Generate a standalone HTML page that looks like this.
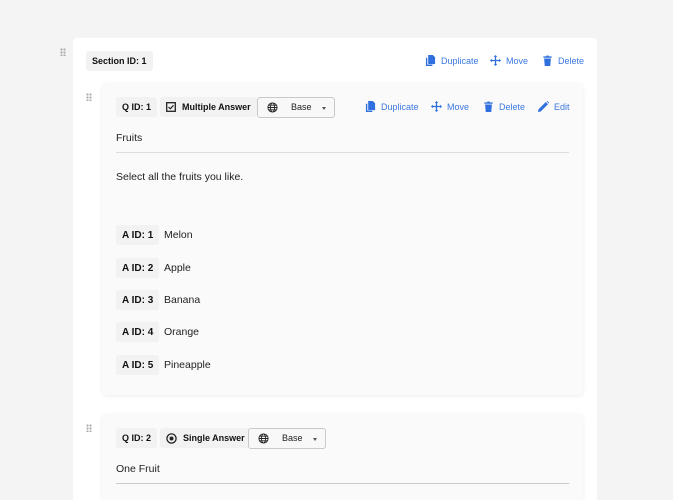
<!DOCTYPE html>
<html style="width:673px;height:500px;overflow:hidden"><head><style>
*{margin:0;padding:0;box-sizing:border-box}
body{width:673px;height:500px;background:#f4f4f4;font-family:"Liberation Sans",sans-serif;position:relative;overflow:hidden;color:#222}
.abs{position:absolute}
.sec{left:73px;top:38px;width:524px;height:462px;background:#fff;border-radius:4px 4px 0 0}
.q{background:#fafafa;border-radius:4px;box-shadow:0 1px 4px rgba(0,0,0,.08)}
.badge{position:absolute;background:#f2f2f2;border-radius:3px;font-size:9px;font-weight:bold;height:20px;padding:0 6px;color:#111;white-space:nowrap;display:flex;align-items:center}
.act{position:absolute;color:#3b78e0;font-size:9px;display:flex;align-items:center;gap:5px;white-space:nowrap}
.act svg{width:11px;height:11px;fill:#2f6fde}
.dd{position:absolute;border:1px solid #c9c9c9;border-radius:3px;background:#f8f8f8;height:21px;font-size:9px;color:#222}
.dd .ar{position:absolute;left:64px;top:9px;border-left:2.5px solid transparent;border-right:2.5px solid transparent;border-top:3px solid #555}
.grip{position:absolute;width:6px;height:8px;background:radial-gradient(circle,#aaa 1px,transparent 1.2px) 0 0/3px 3px}
.t{position:absolute;font-size:10.5px;color:#222;white-space:nowrap}
.line{position:absolute;height:1px;background:#ddd}
.glob{position:absolute;left:9px;top:4px;width:11px;height:11px}
</style></head><body>
<div class="grip" style="left:60px;top:48px"></div>
<div class="abs sec"></div>
<div class="badge" style="left:86px;top:51px">Section ID: 1</div>
<div class="act" style="left:425px;top:55px"><svg viewBox="0 0 12 12"><path d="M1 3h1.5v7.5H8V12H1z M3.5 0h5l2.5 2.5V10h-7.5z"/></svg>Duplicate</div>
<div class="act" style="left:490px;top:55px"><svg viewBox="0 0 12 12"><path d="M6 0l2 2H6.7v3.3H10V4l2 2-2 2V6.7H6.7V10H8l-2 2-2-2h1.3V6.7H2V8L0 6l2-2v1.3h3.3V2H4z"/></svg>Move</div>
<div class="act" style="left:542px;top:55px"><svg viewBox="0 0 12 12"><path d="M1.5 1.5h3l.5-1h2l.5 1h3V3h-9z M2.3 3.8h7.4L9 12H3z"/></svg>Delete</div>

<div class="grip" style="left:86px;top:93px"></div>
<div class="abs q" style="left:102px;top:83px;width:481px;height:312px"></div>
<div class="badge" style="left:116px;top:97px">Q ID: 1</div>
<div class="badge" style="left:160px;top:97px"><svg width="10" height="10" viewBox="0 0 10 10" style="margin-right:6px"><rect x="0.7" y="0.7" width="8.6" height="8.6" fill="none" stroke="#222" stroke-width="1.3"/><path d="M2.5 5l1.8 1.8L7.5 3.3" fill="none" stroke="#222" stroke-width="1.2"/></svg>Multiple Answer</div>
<div class="dd" style="left:257px;top:97px;width:78px"><svg class="glob" viewBox="0 0 12 12" fill="none" stroke="#222" stroke-width="1"><circle cx="6" cy="6" r="5"/><ellipse cx="6" cy="6" rx="2.2" ry="5"/><path d="M1 6h10M1.8 3.5h8.4M1.8 8.5h8.4"/></svg><span class="abs" style="left:33px;top:4px">Base</span><span class="ar"></span></div>
<div class="act" style="left:365px;top:101px"><svg viewBox="0 0 12 12"><path d="M1 3h1.5v7.5H8V12H1z M3.5 0h5l2.5 2.5V10h-7.5z"/></svg>Duplicate</div>
<div class="act" style="left:431px;top:101px"><svg viewBox="0 0 12 12"><path d="M6 0l2 2H6.7v3.3H10V4l2 2-2 2V6.7H6.7V10H8l-2 2-2-2h1.3V6.7H2V8L0 6l2-2v1.3h3.3V2H4z"/></svg>Move</div>
<div class="act" style="left:483px;top:101px"><svg viewBox="0 0 12 12"><path d="M1.5 1.5h3l.5-1h2l.5 1h3V3h-9z M2.3 3.8h7.4L9 12H3z"/></svg>Delete</div>
<div class="act" style="left:538px;top:101px"><svg viewBox="0 0 12 12"><path d="M0 12l.6-3L8.5 1.1l2.4 2.4L3 11.4z M9.3.3l1-0.3 2 2-.3 1z"/></svg>Edit</div>
<div class="t" style="left:116px;top:132px">Fruits</div>
<div class="line" style="left:116px;top:152px;width:453px"></div>
<div class="t" style="left:116px;top:171px">Select all the fruits you like.</div>

<div class="badge" style="left:116px;top:225px;font-size:10px">A ID: 1</div><div class="t" style="left:164px;top:229px">Melon</div>
<div class="badge" style="left:116px;top:258px;font-size:10px">A ID: 2</div><div class="t" style="left:164px;top:262px">Apple</div>
<div class="badge" style="left:116px;top:290px;font-size:10px">A ID: 3</div><div class="t" style="left:164px;top:294px">Banana</div>
<div class="badge" style="left:116px;top:322px;font-size:10px">A ID: 4</div><div class="t" style="left:164px;top:326px">Orange</div>
<div class="badge" style="left:116px;top:355px;font-size:10px">A ID: 5</div><div class="t" style="left:164px;top:359px">Pineapple</div>

<div class="grip" style="left:86px;top:424px"></div>
<div class="abs q" style="left:102px;top:414px;width:481px;height:86px;border-radius:4px 4px 0 0"></div>
<div class="badge" style="left:116px;top:428px">Q ID: 2</div>
<div class="badge" style="left:160px;top:428px"><svg width="11" height="11" viewBox="0 0 11 11" style="margin-right:6px"><circle cx="5.5" cy="5.5" r="4.6" fill="none" stroke="#222" stroke-width="1.3"/><circle cx="5.5" cy="5.5" r="2" fill="#222"/></svg>Single Answer</div>
<div class="dd" style="left:248px;top:428px;width:78px"><svg class="glob" viewBox="0 0 12 12" fill="none" stroke="#222" stroke-width="1"><circle cx="6" cy="6" r="5"/><ellipse cx="6" cy="6" rx="2.2" ry="5"/><path d="M1 6h10M1.8 3.5h8.4M1.8 8.5h8.4"/></svg><span class="abs" style="left:33px;top:4px">Base</span><span class="ar"></span></div>
<div class="t" style="left:116px;top:463px">One Fruit</div>
<div class="line" style="left:116px;top:483px;width:453px;background:#ccc"></div>
</body></html>
